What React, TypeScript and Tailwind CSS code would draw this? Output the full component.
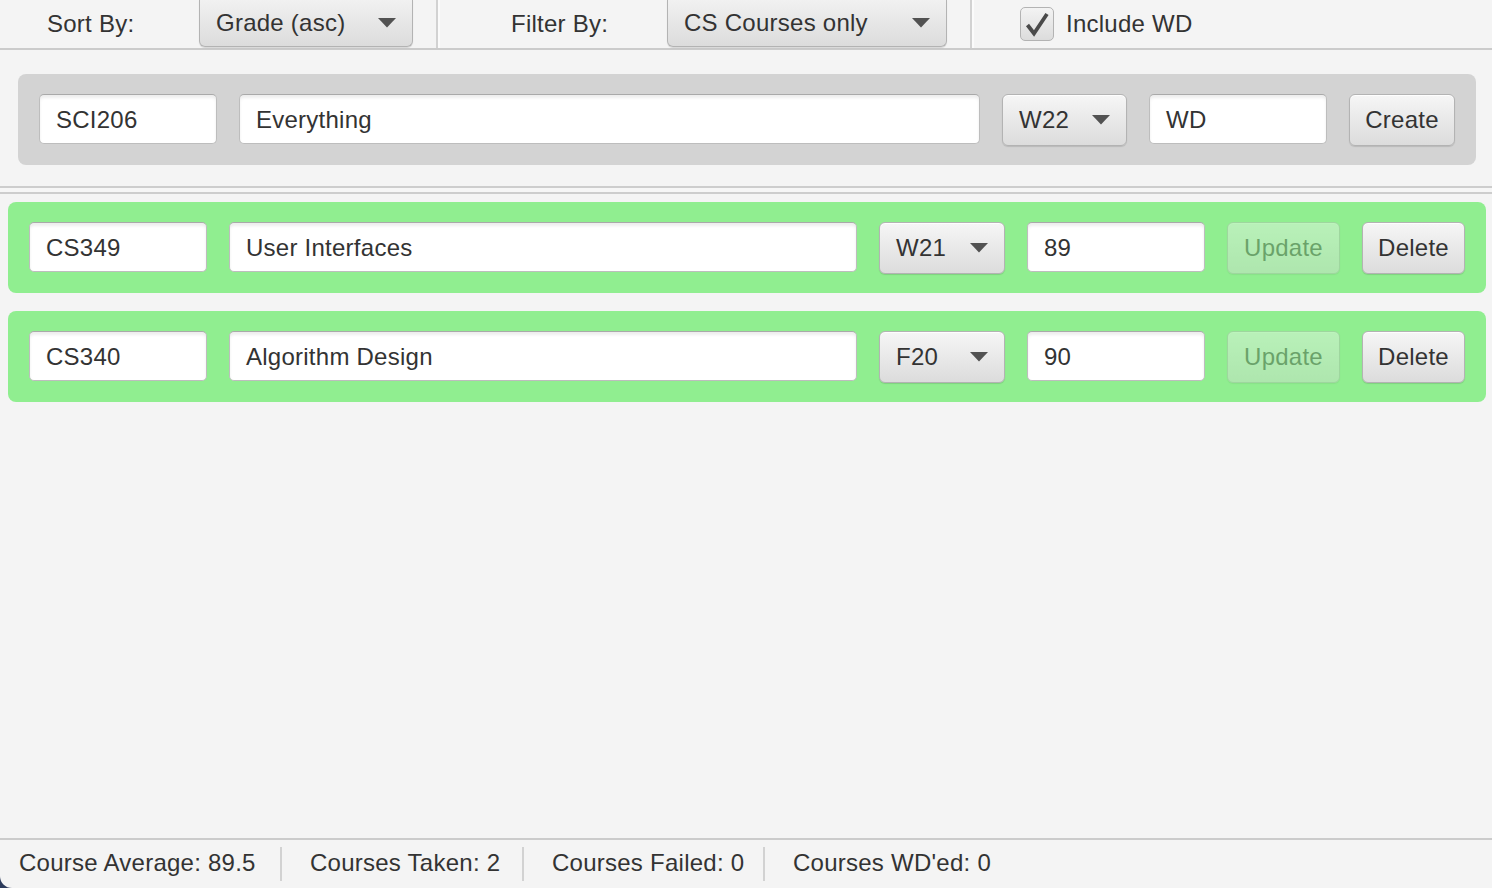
import { type ReactNode } from "react";

const font = "font-['Liberation_Sans',Arial,sans-serif] tracking-[0.25px]";

function Arrow() {
  return (
    <svg width="18" height="10" viewBox="0 0 18 10" className="shrink-0">
      <path d="M0 0 L18 0 L9 9.5 Z" fill="#525252" />
    </svg>
  );
}

function Field({ value, className = "" }: { value: string; className?: string }) {
  return (
    <div
      className={`h-[50px] flex items-center pl-[16px] pt-[2px] bg-white rounded-[5px] border border-[#bdbdbd] border-t-[#a9a9a9] shadow-[inset_0_3px_3px_rgba(0,0,0,0.07)] text-[24px] text-[#333] ${className}`}
    >
      {value}
    </div>
  );
}

const btnBase =
  "h-[52px] rounded-[6px] border border-[#b3b3b3] bg-linear-to-b from-[#f6f6f6] to-[#dcdcdc] shadow-[inset_0_1px_0_rgba(255,255,255,0.9),0_1px_1px_rgba(0,0,0,0.12)] text-[24px] text-[#333]";

function Combo({ value, className = "" }: { value: string; className?: string }) {
  return (
    <div className={`${btnBase} flex items-center justify-between pl-[16px] pr-[16px] ${className}`}>
      <span>{value}</span>
      <Arrow />
    </div>
  );
}

function Button({ children, disabled, className = "" }: { children: ReactNode; disabled?: boolean; className?: string }) {
  return (
    <div
      className={`${btnBase} flex items-center justify-center ${disabled ? "opacity-40" : ""} ${className}`}
    >
      {children}
    </div>
  );
}

function VSep() {
  return <div className="w-[2px] self-stretch bg-[#d2d2d2] shadow-[2px_0_0_#fbfbfb]" />;
}

function CourseRow({ code, name, term, grade }: { code: string; name: string; term: string; grade: string }) {
  return (
    <div className="h-[91px] rounded-[8px] bg-[#90ee90] flex items-start pt-[20px] pl-[21px] pr-[21px] gap-[22px]">
      <Field value={code} className="w-[178px]" />
      <Field value={name} className="flex-1" />
      <Combo value={term} className="w-[126px]" />
      <Field value={grade} className="w-[178px]" />
      <Button disabled className="w-[113px]">Update</Button>
      <Button className="w-[103px]">Delete</Button>
    </div>
  );
}

// widths measured off the status labels so the separators land in place
const stats = [
  { text: "Course Average: 89.5", w: "w-[237px]" },
  { text: "Courses Taken: 2", w: "w-[188px]" },
  { text: "Courses Failed: 0", w: "w-[187px]" },
  { text: "Courses WD'ed: 0", w: "w-[200px]" },
];

export default function App() {
  return (
    <div className={`h-screen w-full bg-[#2d3b5c] ${font}`}>
      <div className="h-full w-full flex flex-col bg-[#f4f4f4] rounded-bl-[12px] overflow-hidden text-[#333]">
        {/* toolbar */}
        <div className="h-[50px] shrink-0 flex items-start border-b-2 border-[#cbcbcb] text-[24px]">
          <div className="w-[152px] ml-[47px] h-[47px] flex items-center">Sort By:</div>
          <div className="w-[214px] h-[47px] flex items-center justify-between pl-[16px] pr-[16px] rounded-b-[6px] border-x border-b border-[#b3b3b3] bg-linear-to-b from-[#f1f1f1] to-[#dcdcdc] shadow-[0_1px_1px_rgba(0,0,0,0.12)]">
            <span>Grade (asc)</span>
            <Arrow />
          </div>
          <div className="ml-[23px] h-[48px] flex"><VSep /></div>
          <div className="w-[156px] ml-[73px] h-[47px] flex items-center">Filter By:</div>
          <div className="w-[280px] h-[47px] flex items-center justify-between pl-[16px] pr-[16px] rounded-b-[6px] border-x border-b border-[#b3b3b3] bg-linear-to-b from-[#f1f1f1] to-[#dcdcdc] shadow-[0_1px_1px_rgba(0,0,0,0.12)]">
            <span>CS Courses only</span>
            <Arrow />
          </div>
          <div className="ml-[23px] h-[48px] flex"><VSep /></div>
          <div className="ml-[48px] h-[47px] flex items-center gap-[12px]">
            <div className="w-[34px] h-[34px] rounded-[5px] border border-[#b3b3b3] bg-linear-to-b from-[#f3f3f3] to-[#dcdcdc] flex items-center justify-center">
              <svg width="26" height="26" viewBox="0 0 26 26">
                <path d="M3.5 14 L10 22.5 L23 3" fill="none" stroke="#4a4a4a" strokeWidth="3.8" strokeLinejoin="miter" strokeLinecap="butt" />
              </svg>
            </div>
            <span>Include WD</span>
          </div>
        </div>

        {/* create panel */}
        <div className="shrink-0 pt-[24px] pb-[21px] pl-[18px] pr-[16px]">
          <div className="h-[91px] rounded-[8px] bg-[#d3d3d3] flex items-start pt-[20px] pl-[21px] pr-[21px] gap-[22px]">
            <Field value="SCI206" className="w-[178px]" />
            <Field value="Everything" className="flex-1" />
            <Combo value="W22" className="w-[125px]" />
            <Field value="WD" className="w-[178px]" />
            <Button className="w-[106px]">Create</Button>
          </div>
        </div>

        <div className="shrink-0 h-[2px] bg-[#cdcdcd]" />
        <div className="shrink-0 h-[4px] bg-[#f6f6f6]" />
        <div className="shrink-0 h-[2px] bg-[#cdcdcd]" />

        {/* course list */}
        <div className="flex-1 flex flex-col gap-[18px] pt-[8px] pl-[8px] pr-[6px]">
          <CourseRow code="CS349" name="User Interfaces" term="W21" grade="89" />
          <CourseRow code="CS340" name="Algorithm Design" term="F20" grade="90" />
        </div>

        {/* status bar */}
        <div className="shrink-0 h-[50px] border-t-2 border-[#cbcbcb] flex items-center pl-[19px] pb-[3px] text-[24px]">
          {stats.map((s, i) => (
            <div key={s.text} className="flex items-center h-full">
              {i > 0 && <div className="ml-[24px] mr-[28px] w-[2px] h-[34px] mt-[3px] bg-[#d2d2d2]" />}
              <span className={`${s.w} whitespace-nowrap`}>{s.text}</span>
            </div>
          ))}
        </div>
      </div>
    </div>
  );
}
